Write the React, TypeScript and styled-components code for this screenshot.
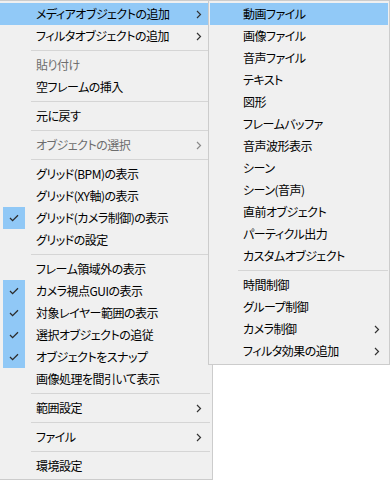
import React from "react";
import styled, { createGlobalStyle } from "styled-components";

const GlobalStyle = createGlobalStyle`
  html, body { margin: 0; padding: 0; background: #ffffff; }
  body {
    font-family: "Noto Sans CJK JP", "Noto Sans", sans-serif;
    font-size: 12px;
    color: #000;
  }
`;

const Stage = styled.div`
  position: relative;
  width: 390px;
  height: 480px;
  overflow: hidden;
  background: #ffffff;
`;

const Menu = styled.div<{ $width: number; $height: number; $floating?: boolean }>`
  box-sizing: border-box;
  width: ${(p) => p.$width}px;
  height: ${(p) => p.$height}px;
  background: #f0f0f0;
  border: 1px solid #cccccc;
  display: flex;
  flex-direction: column;
  ${(p) =>
    p.$floating
      ? `position: absolute; left: 208px; top: 0; padding: 2px 1px;`
      : `border-left: none; padding: 2px 2px 2px 0;`}
`;

const Row = styled.div<{ $inset: number; $hot?: boolean; $disabled?: boolean }>`
  flex: none;
  height: 22px;
  display: grid;
  grid-template-columns: ${(p) => p.$inset}px 1fr 22px;
  align-items: center;
  background: ${(p) => (p.$hot ? "#91c9f7" : "transparent")};
  color: ${(p) => (p.$disabled ? "#6d6d6d" : "#000000")};
  white-space: nowrap;
`;

const CheckCell = styled.div<{ $on?: boolean }>`
  width: 22px;
  height: 22px;
  margin-left: 3px;
  display: flex;
  align-items: center;
  justify-content: center;
  background: ${(p) => (p.$on ? "#90c8f6" : "transparent")};
`;

const Label = styled.span`
  line-height: 22px;
  font-size: 12px;
  letter-spacing: -0.5px;
  font-feature-settings: "palt" 1;
`;

const ArrowCell = styled.div`
  display: flex;
  align-items: center;
  justify-content: center;
`;

const Separator = styled.div<{ $inset: number }>`
  flex: none;
  height: 7px;
  display: flex;
  align-items: center;
  padding-left: ${(p) => p.$inset}px;
  &::after {
    content: "";
    flex: 1;
    height: 1px;
    background: #d5d5d5;
  }
`;

const Check = () => (
  <svg width="10" height="8" viewBox="0 0 10 8">
    <polyline points="1,4 3.6,6.6 9,1.2" fill="none" stroke="#2b2b2b" strokeWidth="1.3" />
  </svg>
);

const Chevron = ({ dim }: { dim?: boolean }) => (
  <svg width="6" height="9" viewBox="0 0 6 9">
    <polyline points="1,1 4.5,4.5 1,8" fill="none" stroke={dim ? "#8a8a8a" : "#333333"} strokeWidth="1.2" />
  </svg>
);

type Entry =
  | { sep: true }
  | { label: string; check?: boolean; sub?: boolean; disabled?: boolean; hot?: boolean; sep?: false };

const mainItems: Entry[] = [
  { label: "メディアオブジェクトの追加", sub: true, hot: true },
  { label: "フィルタオブジェクトの追加", sub: true },
  { sep: true },
  { label: "貼り付け", disabled: true },
  { label: "空フレームの挿入" },
  { sep: true },
  { label: "元に戻す" },
  { sep: true },
  { label: "オブジェクトの選択", disabled: true, sub: true },
  { sep: true },
  { label: "グリッド(BPM)の表示" },
  { label: "グリッド(XY軸)の表示" },
  { label: "グリッド(カメラ制御)の表示", check: true },
  { label: "グリッドの設定" },
  { sep: true },
  { label: "フレーム領域外の表示" },
  { label: "カメラ視点GUIの表示", check: true },
  { label: "対象レイヤー範囲の表示", check: true },
  { label: "選択オブジェクトの追従", check: true },
  { label: "オブジェクトをスナップ", check: true },
  { label: "画像処理を間引いて表示" },
  { sep: true },
  { label: "範囲設定", sub: true },
  { sep: true },
  { label: "ファイル", sub: true },
  { sep: true },
  { label: "環境設定" },
];

const subItems: Entry[] = [
  { label: "動画ファイル", hot: true },
  { label: "画像ファイル" },
  { label: "音声ファイル" },
  { label: "テキスト" },
  { label: "図形" },
  { label: "フレームバッファ" },
  { label: "音声波形表示" },
  { label: "シーン" },
  { label: "シーン(音声)" },
  { label: "直前オブジェクト" },
  { label: "パーティクル出力" },
  { label: "カスタムオブジェクト" },
  { sep: true },
  { label: "時間制御" },
  { label: "グループ制御" },
  { label: "カメラ制御", sub: true },
  { label: "フィルタ効果の追加", sub: true },
];

const MenuList = ({ items, inset, sepInset }: { items: Entry[]; inset: number; sepInset: number }) => (
  <>
    {items.map((it, i) =>
      it.sep ? (
        <Separator key={i} $inset={sepInset} />
      ) : (
        <Row key={i} $inset={inset} $hot={it.hot} $disabled={it.disabled}>
          <CheckCell $on={it.check}>{it.check ? <Check /> : null}</CheckCell>
          <Label>{it.label}</Label>
          <ArrowCell>{it.sub ? <Chevron dim={it.disabled} /> : null}</ArrowCell>
        </Row>
      )
    )}
  </>
);

export default function App() {
  return (
    <>
      <GlobalStyle />
      <Stage>
        <Menu $width={213} $height={480}>
          <MenuList items={mainItems} inset={36} sepInset={31} />
        </Menu>
        <Menu $width={182} $height={365} $floating>
          <MenuList items={subItems} inset={33} sepInset={28} />
        </Menu>
      </Stage>
    </>
  );
}
